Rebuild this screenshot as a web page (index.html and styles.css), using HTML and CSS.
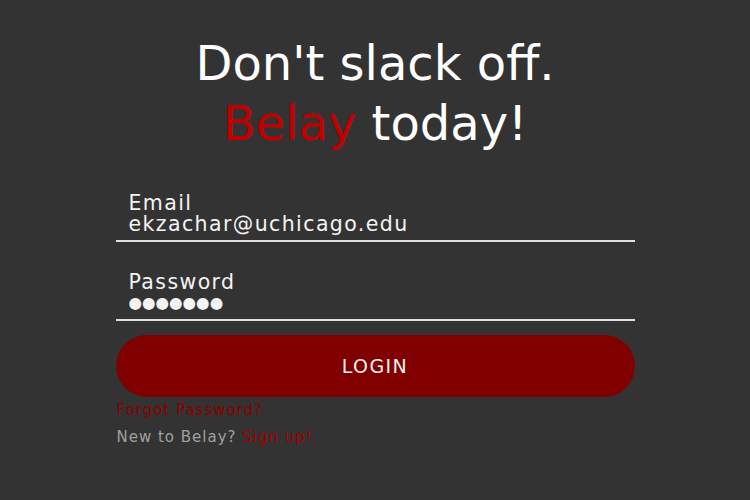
FILE: index.html
```html
<!DOCTYPE html>
<html>
<head>
<meta charset="utf-8">
<link rel="stylesheet" href="styles.css">
</head>
<body>
<main class="page">
  <h1 class="title">Don't slack off.<br><span class="accent">Belay</span> today!</h1>
  <form class="form">
    <div class="field">
      <div class="label">Email</div>
      <div class="value">ekzachar@uchicago.edu</div>
    </div>
    <div class="field">
      <div class="label">Password</div>
      <div class="value dots">●●●●●●●</div>
    </div>
    <button type="button" class="login">LOGIN</button>
    <div class="links">
      <a class="forgot">Forgot Password?</a>
      <div class="signup-line">New to Belay? <a class="signup">Sign up!</a></div>
    </div>
  </form>
</main>
</body>
</html>
```
FILE: styles.css
```css
html, body {
  margin: 0;
  padding: 0;
  background: #333333;
  height: 100%;
}
body {
  font-family: "DejaVu Sans", sans-serif;
  color: #f2f2f2;
}
.page {
  width: 519px;
  margin: 0 auto;
  padding-top: 33px;
}
.title {
  margin: 0;
  font-weight: 400;
  font-size: 48px;
  line-height: 60px;
  text-align: center;
  color: #ffffff;
}
.accent {
  color: #c00000;
}
.form {
  margin-top: 40px;
  display: flex;
  flex-direction: column;
}
.field {
  padding: 0 13px 5px;
  border-bottom: 2px solid #e0e0e0;
  margin-bottom: 30px;
}
.label, .value {
  font-size: 20.5px;
  line-height: 21px;
  letter-spacing: 1.4px;
  color: #f4f4f4;
}
.dots {
  font-size: 15.5px;
  letter-spacing: 0px;
}
.field + .field {
  margin-bottom: 14px;
}
.login {
  height: 62px;
  border: none;
  border-radius: 31px;
  background: #800000;
  color: #f0f0f0;
  font-family: inherit;
  font-size: 19px;
  letter-spacing: 1.4px;
  cursor: pointer;
}
.links {
  padding-left: 1px;
  margin-top: 0;
  font-size: 15px;
  line-height: 27px;
  letter-spacing: 1px;
}
.forgot {
  display: block;
  color: #8a0000;
}
.signup-line {
  color: #a0a0a0;
}
.signup {
  color: #a30000;
}
```
